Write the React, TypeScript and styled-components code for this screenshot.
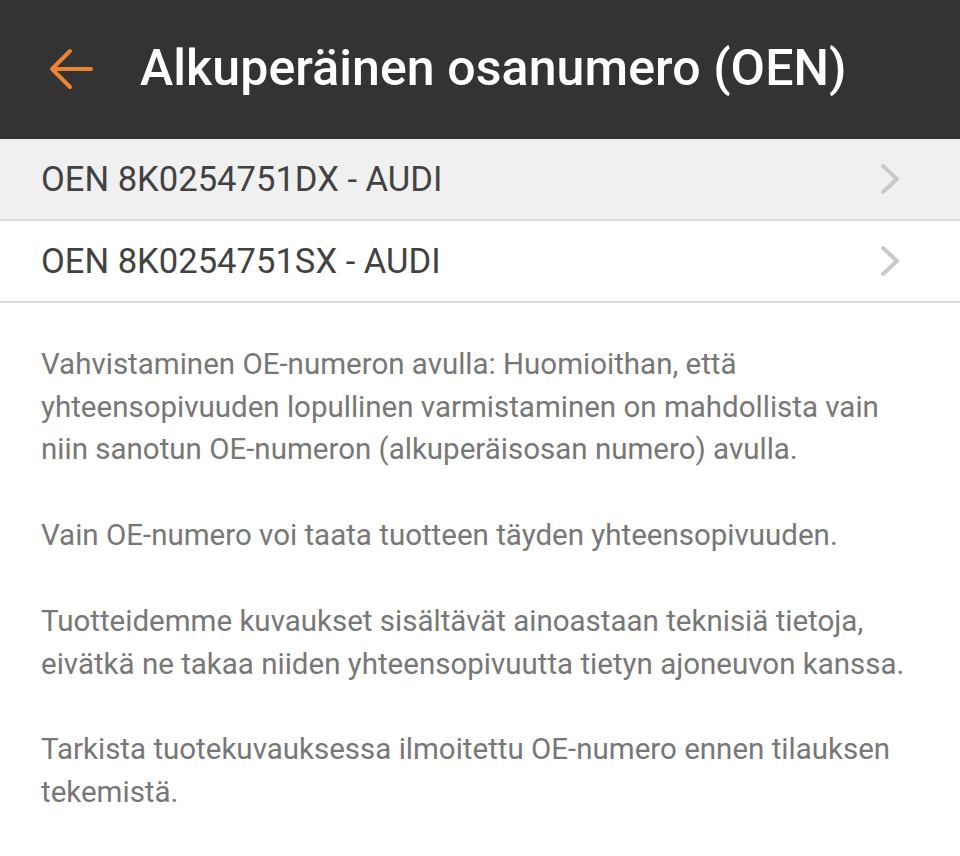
import React from 'react'
import styled, { createGlobalStyle } from 'styled-components'

const GlobalStyle = createGlobalStyle`
  body {
    margin: 0;
    background: #ffffff;
    font-family: Roboto, 'Noto Sans', Arial, sans-serif;
  }
`

const items = ['OEN 8K0254751DX - AUDI', 'OEN 8K0254751SX - AUDI']

const paragraphs = [
  'Vahvistaminen OE-numeron avulla: Huomioithan, että yhteensopivuuden lopullinen varmistaminen on mahdollista vain niin sanotun OE-numeron (alkuperäisosan numero) avulla.',
  'Vain OE-numero voi taata tuotteen täyden yhteensopivuuden.',
  'Tuotteidemme kuvaukset sisältävät ainoastaan teknisiä tietoja, eivätkä ne takaa niiden yhteensopivuutta tietyn ajoneuvon kanssa.',
  'Tarkista tuotekuvauksessa ilmoitettu OE-numero ennen tilauksen tekemistä.',
]

const App = () => {
  return (
    <>
      <GlobalStyle />
      <Page>
        <Toolbar>
          <BackButton aria-label="back">
            <svg width="44" height="42" viewBox="0 0 44 42" fill="none">
              <path
                d="M42 21H4M21 3L3 21L21 39"
                stroke="#ea8430"
                strokeWidth="4"
                strokeLinecap="round"
                strokeLinejoin="round"
              />
            </svg>
          </BackButton>
          <Title>Alkuperäinen osanumero (OEN)</Title>
        </Toolbar>

        <List>
          {items.map((item, i) => (
            <Row key={item} active={i === 0}>
              <RowText>{item}</RowText>
              <svg width="20" height="30" viewBox="0 0 20 30" fill="none">
                <path d="M3 2L17 15L3 28" stroke="#c9c9c9" strokeWidth="4" strokeLinecap="round" strokeLinejoin="round" />
              </svg>
            </Row>
          ))}
        </List>

        <Info>
          {paragraphs.map((p) => (
            <Paragraph key={p}>{p}</Paragraph>
          ))}
        </Info>
      </Page>
    </>
  )
}

export default App

const Page = styled.div`
  width: 960px;
  min-height: 856px;
  background: #ffffff;
`

const Toolbar = styled.header`
  display: flex;
  align-items: center;
  height: 139px;
  padding: 0 0 0 48px;
  box-sizing: border-box;
  background: #333333;
  gap: 46px;
`

const BackButton = styled.div`
  display: flex;
  align-items: center;
  justify-content: center;
  width: 46px;
  height: 46px;
  margin-top: -2px;
`

const Title = styled.h1`
  margin: 0;
  color: #ffffff;
  font-family: Roboto, sans-serif;
  font-size: 50px;
  font-weight: 500;
  letter-spacing: 0.1px;
  margin-top: -4px;
`

const List = styled.div`
  display: flex;
  flex-direction: column;
`

const Row = styled.div<{ active: boolean }>`
  display: flex;
  align-items: center;
  justify-content: space-between;
  height: 82px;
  box-sizing: border-box;
  padding: 0 60px 0 41px;
  background: ${(props) => (props.active ? '#f0f0f0' : '#ffffff')};
  border-bottom: 2px solid #dddddd;
`

const RowText = styled.span`
  color: #424242;
  font-family: Roboto, sans-serif;
  font-size: 34.6px;
  font-weight: 400;
`

const Info = styled.div`
  display: flex;
  flex-direction: column;
  gap: 43px;
  padding: 40px 40px 0 41px;
`

const Paragraph = styled.p`
  margin: 0;
  color: #777777;
  font-family: Roboto, sans-serif;
  font-size: 29.5px;
  line-height: 42.7px;
`
